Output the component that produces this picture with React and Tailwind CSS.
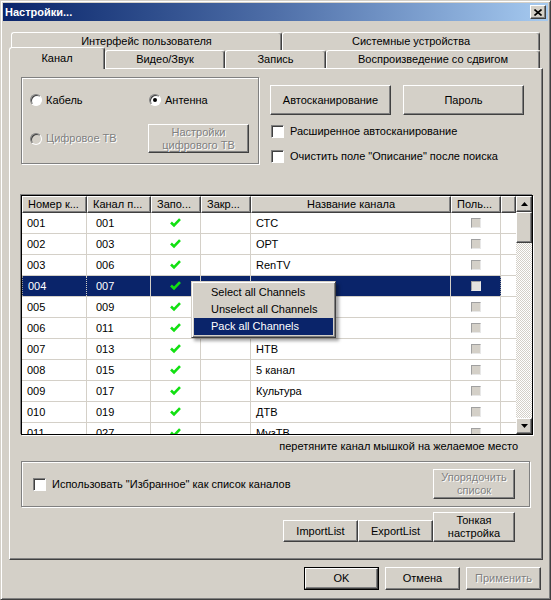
import React from 'react';

const raised = "border border-t-white border-l-white border-r-[#404040] border-b-[#404040] shadow-[inset_-1px_-1px_0_#808080]";
const sunken = "border border-t-[#808080] border-l-[#808080] border-r-white border-b-white shadow-[inset_1px_1px_0_#404040]";
const etched = "border border-[#808080] shadow-[inset_1px_1px_0_#fff,1px_1px_0_#fff]";
const disabledText = "text-[#808080] [text-shadow:1px_1px_0_#fff]";

const Button = ({className, disabled, children}) => (
    <div className={`${raised} bg-[#d4d0c8] flex items-center justify-center text-center leading-[13px] ${disabled ? disabledText : 'text-black'} ${className}`}>
        {children}
    </div>
);

const Radio = ({checked, disabled}) => (
    <span className={`w-[12px] h-[12px] rounded-full border border-t-[#808080] border-l-[#808080] border-r-white border-b-white shadow-[inset_1px_1px_0_#404040] flex items-center justify-center shrink-0 ${disabled ? 'bg-[#d4d0c8]' : 'bg-white'}`}>
        {checked && <span className="w-[4px] h-[4px] rounded-full bg-black"/>}
    </span>
);

const Checkbox = () => (
    <span className={`w-[13px] h-[13px] bg-white shrink-0 ${sunken}`}/>
);

const Tick = () => (
    <svg width="11" height="10" viewBox="0 0 11 10">
        <path d="M1 4.5 L4 7.5 L10 1.2" stroke="#12e012" strokeWidth="2.6" fill="none"/>
    </svg>
);

const Tab = ({w, selected, children}) => (
    <div className={`${w} ${selected ? 'h-[22px] -mb-[1px] relative z-10' : 'h-full'} bg-[#d4d0c8] border-t border-l border-white border-r border-r-[#404040] rounded-t-[3px] shadow-[inset_-1px_0_0_#808080] flex items-center justify-center shrink-0`}>
        {children}
    </div>
);

const colW = ["w-[65px]", "w-[64px]", "w-[50px]", "w-[50px]", "w-[200px]", "w-[50px]", "w-[15px]"];
const headers = ["Номер к...", "Канал п...", "Запо...", "Закр...", "Название канала", "Поль...", ""];

// названия 004-006 закрыты контекстным меню
const rows = [
    ["001", "001", "СТС"],
    ["002", "003", "ОРТ"],
    ["003", "006", "RenTV"],
    ["004", "007", ""],
    ["005", "009", ""],
    ["006", "011", ""],
    ["007", "013", "НТВ"],
    ["008", "015", "5 канал"],
    ["009", "017", "Культура"],
    ["010", "019", "ДТВ"],
    ["011", "027", "МузТВ"],
];

export default function App() {
    return (
        <div className="w-[551px] h-[600px] overflow-hidden bg-[#d4d0c8] border border-t-[#d4d0c8] border-l-[#d4d0c8] border-r-[#404040] border-b-[#404040] shadow-[inset_1px_1px_0_#fff,inset_-1px_-1px_0_#808080] p-[2px] flex flex-col text-[11px] text-black font-['Liberation_Sans',Arial,sans-serif]">
            {/* title bar */}
            <div className="h-[18px] shrink-0 bg-linear-to-r from-[#0a246a] via-[#4f6fa8] to-[#a6caf0] flex items-center justify-between pl-[2px] pr-[2px]">
                <span className="text-white font-bold text-[11px]">Настройки...</span>
                <div className={`w-[16px] h-[14px] bg-[#d4d0c8] ${raised} flex items-center justify-center`}>
                    <svg width="8" height="7" viewBox="0 0 8 7">
                        <path d="M0.5 0.5 L7.5 6.5 M7.5 0.5 L0.5 6.5" stroke="#000" strokeWidth="1.6"/>
                    </svg>
                </div>
            </div>

            {/* back tab row */}
            <div className="mt-[11px] h-[18px] flex pl-[8px] shrink-0">
                <Tab w="w-[271px]">Интерфейс пользователя</Tab>
                <Tab w="w-[258px]">Системные устройства</Tab>
            </div>
            {/* front tab row */}
            <div className="h-[18px] flex items-end pl-[6px] shrink-0">
                <Tab w="w-[96px]" selected>Канал</Tab>
                <Tab w="w-[120px]">Видео/Звук</Tab>
                <Tab w="w-[101px]">Запись</Tab>
                <Tab w="w-[214px]">Воспроизведение со сдвигом</Tab>
            </div>

            {/* panel */}
            <div className={`ml-[6px] w-[534px] h-[492px] shrink-0 ${raised} flex flex-col pl-[11px]`}>
                <div className="mt-[8px] flex">
                    <div className={`w-[238px] h-[87px] ${etched} flex flex-col pl-[8px]`}>
                        <div className="mt-[15px] h-[14px] flex items-center">
                            <div className="w-[119px] flex items-center gap-[4px]"><Radio/>Кабель</div>
                            <div className="flex items-center gap-[4px]"><Radio checked/>Антенна</div>
                        </div>
                        <div className="mt-[17px] h-[29px] flex items-center">
                            <div className={`w-[118px] flex items-center gap-[4px] ${disabledText}`}><Radio disabled/>Цифровое ТВ</div>
                            <Button disabled className="w-[101px] h-[29px]">Настройки<br/>цифрового ТВ</Button>
                        </div>
                    </div>
                    <div className="ml-[11px] mt-[8px] flex flex-col">
                        <div className="flex gap-[12px]">
                            <Button className="w-[121px] h-[30px]">Автосканирование</Button>
                            <Button className="w-[121px] h-[30px]">Пароль</Button>
                        </div>
                        <div className="mt-[10px] ml-[1px] h-[13px] flex items-center gap-[6px]"><Checkbox/>Расширенное автосканирование</div>
                        <div className="mt-[12px] ml-[1px] h-[13px] flex items-center gap-[6px]"><Checkbox/>Очистить поле "Описание" после поиска</div>
                    </div>
                </div>

                {/* channel list */}
                <div className="mt-[31px] w-[512px] h-[240px] border border-black shadow-[-1px_-1px_0_#808080,1px_1px_0_#fff] bg-white flex relative">
                    <div className="w-[494px] flex flex-col">
                        <div className="h-[17px] flex">
                            {headers.map((h, i) => (
                                <div key={i} className={`${colW[i]} h-full bg-[#d4d0c8] ${raised} flex items-center overflow-hidden whitespace-nowrap ${i === 4 ? 'justify-center' : 'pl-[5px]'}`}>{h}</div>
                            ))}
                        </div>
                        <div className="h-[221px] overflow-hidden flex flex-col">
                            {rows.map((r, idx) => {
                                const sel = idx === 3;
                                const cell = `h-full border-r border-[#d4d0c8] flex items-center shrink-0 ${sel ? 'bg-[#0a246a] text-white' : ''}`;
                                return (
                                    <div key={idx} className="h-[21px] shrink-0 flex border-b border-[#d4d0c8]">
                                        <div className={`${colW[0]} ${cell} pl-[5px] ${sel ? 'border-l border-dotted border-l-[#999]' : ''}`}>{r[0]}</div>
                                        <div className={`${colW[1]} ${cell} pl-[9px]`}>{r[1]}</div>
                                        <div className={`${colW[2]} ${cell} justify-center`}><Tick/></div>
                                        <div className={`${colW[3]} ${cell}`}></div>
                                        <div className={`${colW[4]} ${cell} pl-[5px]`}>{r[2]}</div>
                                        <div className={`${colW[5]} ${cell} justify-center ${sel ? 'border-r-[#999] border-dotted' : ''}`}>
                                            <span className={`w-[10px] h-[10px] border border-t-[#a0a0a0] border-l-[#a0a0a0] border-r-[#e8e8e8] border-b-[#e8e8e8] ${sel ? 'bg-[#e4e2de]' : 'bg-[#d4d0c8]'}`}/>
                                        </div>
                                        <div className={`${colW[6]} h-full`}></div>
                                    </div>
                                );
                            })}
                        </div>
                    </div>
                    {/* scrollbar */}
                    <div className="w-[16px] flex flex-col bg-[repeating-conic-gradient(#fff_0%_25%,#d4d0c8_0%_50%)] bg-[length:2px_2px]">
                        <div className={`h-[16px] shrink-0 bg-[#d4d0c8] ${raised} flex items-center justify-center`}>
                            <svg width="7" height="4" viewBox="0 0 7 4"><path d="M3.5 0 L7 4 L0 4 Z" fill="#000"/></svg>
                        </div>
                        <div className={`h-[31px] shrink-0 bg-[#d4d0c8] ${raised}`}/>
                        <div className="flex-1"/>
                        <div className={`h-[16px] shrink-0 bg-[#d4d0c8] ${raised} flex items-center justify-center`}>
                            <svg width="7" height="4" viewBox="0 0 7 4"><path d="M0 0 L7 0 L3.5 4 Z" fill="#000"/></svg>
                        </div>
                    </div>

                    {/* context menu */}
                    <div className={`absolute left-[169px] top-[85px] w-[145px] h-[57px] bg-[#d4d0c8] border border-t-[#d4d0c8] border-l-[#d4d0c8] border-r-[#404040] border-b-[#404040] shadow-[inset_1px_1px_0_#fff,inset_-1px_-1px_0_#808080,3px_3px_3px_rgba(0,0,0,0.35)] p-[2px] flex flex-col z-20`}>
                        <div className="h-[17px] flex items-center pl-[17px]">Select all Channels</div>
                        <div className="h-[17px] flex items-center pl-[17px]">Unselect all Channels</div>
                        <div className="h-[17px] flex items-center pl-[17px] bg-[#0a246a] text-white">Pack all Channels</div>
                    </div>
                </div>

                <div className="mt-[5px] h-[13px] flex items-center justify-end pr-[24px]">перетяните канал мышкой на желаемое место</div>

                <div className={`mt-[8px] w-[509px] h-[46px] ${etched} flex items-center justify-between pl-[11px] pr-[14px]`}>
                    <div className="flex items-center gap-[6px]"><Checkbox/>Использовать "Избранное" как список каналов</div>
                    <Button disabled className="w-[82px] h-[30px]">Упорядочить<br/>список</Button>
                </div>

                <div className="mt-[5px] flex justify-end items-end pr-[27px]">
                    <Button className="w-[75px] h-[22px]">ImportList</Button>
                    <Button className="w-[75px] h-[22px]">ExportList</Button>
                    <Button className="w-[82px] h-[30px]">Тонкая<br/>настройка</Button>
                </div>
            </div>

            {/* dialog buttons */}
            <div className="mt-[7px] flex justify-end gap-[6px] pr-[7px]">
                <div className="border border-black">
                    <Button className="w-[73px] h-[21px]">OK</Button>
                </div>
                <Button className="w-[75px] h-[23px]">Отмена</Button>
                <Button disabled className="w-[75px] h-[23px]">Применить</Button>
            </div>
        </div>
    );
}
